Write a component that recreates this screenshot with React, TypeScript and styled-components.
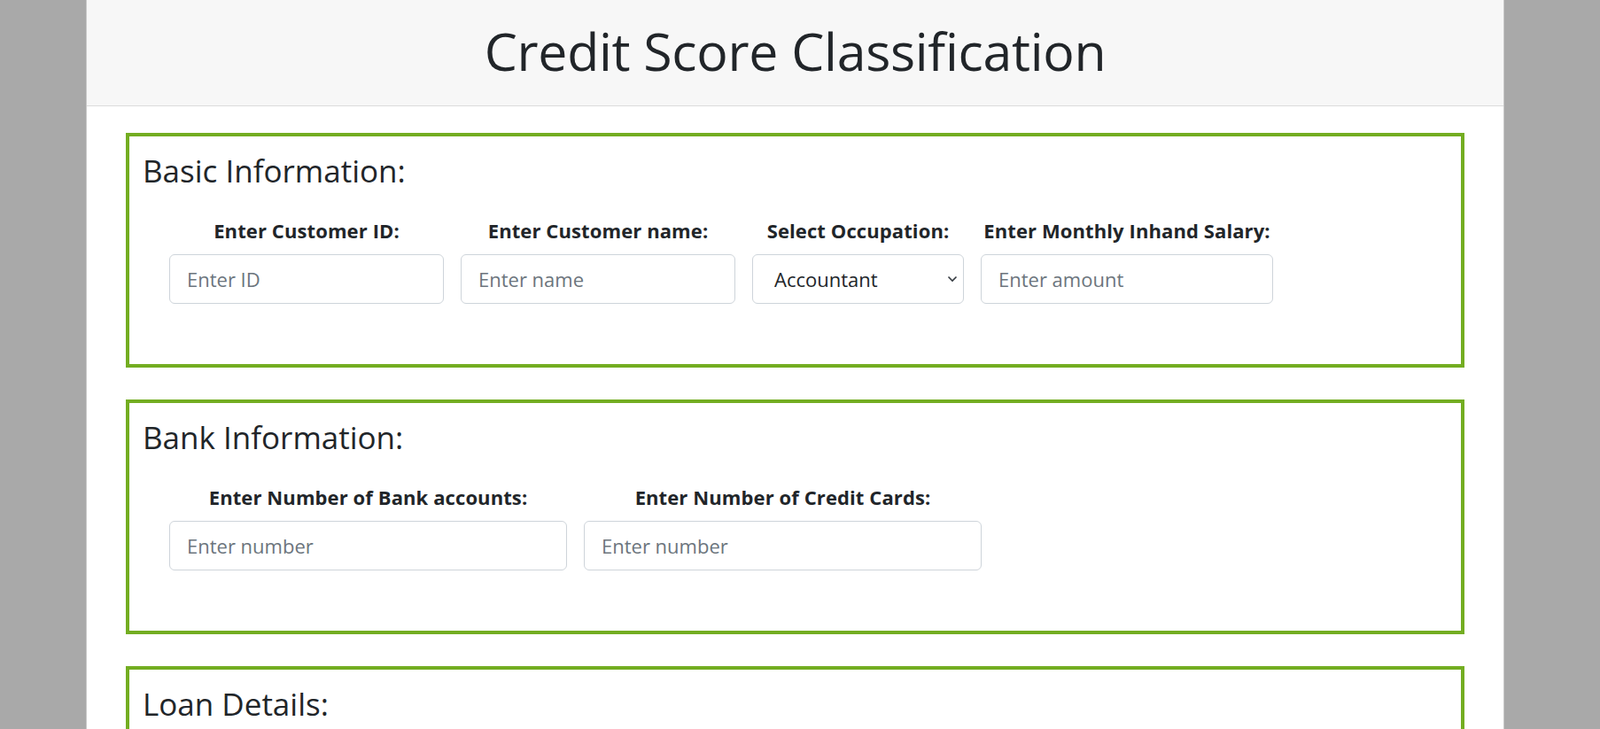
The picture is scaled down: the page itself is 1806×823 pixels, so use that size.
import React from "react";
import styled, { createGlobalStyle } from "styled-components";

const occupations = [
    "Accountant",
    "Architect",
    "Developer",
    "Doctor",
    "Engineer",
    "Entrepreneur",
    "Journalist",
    "Lawyer",
    "Manager",
    "Mechanic",
    "Media_Manager",
    "Musician",
    "Scientist",
    "Teacher",
    "Writer",
];

export default function App() {
    return (
        <>
            <GlobalStyle />
            <Page>
                <Card>
                    <Header>
                        <Title>Credit Score Classification</Title>
                    </Header>

                    <CardBody>
                        <Section>
                            <SectionTitle>Basic Information:</SectionTitle>
                            <FieldRow>
                                <Field width={310}>
                                    <Label>Enter Customer ID:</Label>
                                    <Input type="text" placeholder="Enter ID" />
                                </Field>
                                <Field width={310}>
                                    <Label>Enter Customer name:</Label>
                                    <Input type="text" placeholder="Enter name" />
                                </Field>
                                <Field width={239}>
                                    <Label>Select Occupation:</Label>
                                    <SelectWrap>
                                        <Select defaultValue="Accountant">
                                            {occupations.map((o) => (
                                                <option key={o} value={o}>
                                                    {o}
                                                </option>
                                            ))}
                                        </Select>
                                        <Chevron width="12" height="8" viewBox="0 0 12 8">
                                            <path d="M1.5 1.5 6 6l4.5-4.5" />
                                        </Chevron>
                                    </SelectWrap>
                                </Field>
                                <Field width={330}>
                                    <Label>Enter Monthly Inhand Salary:</Label>
                                    <Input type="number" placeholder="Enter amount" />
                                </Field>
                            </FieldRow>
                        </Section>

                        <Section>
                            <SectionTitle>Bank Information:</SectionTitle>
                            <FieldRow>
                                <Field width={449}>
                                    <Label>Enter Number of Bank accounts:</Label>
                                    <Input type="number" placeholder="Enter number" />
                                </Field>
                                <Field width={449}>
                                    <Label>Enter Number of Credit Cards:</Label>
                                    <Input type="number" placeholder="Enter number" />
                                </Field>
                            </FieldRow>
                        </Section>

                        <Section>
                            <SectionTitle>Loan Details:</SectionTitle>
                            <FieldRow>
                                <Field width={310}>
                                    <Label>Enter Interest Rate:</Label>
                                    <Input type="number" placeholder="Enter rate" />
                                </Field>
                                <Field width={310}>
                                    <Label>Enter Number of Loans:</Label>
                                    <Input type="number" placeholder="Enter number" />
                                </Field>
                            </FieldRow>
                        </Section>
                    </CardBody>
                </Card>
            </Page>
        </>
    );
}

const GlobalStyle = createGlobalStyle`
    html, body {
        margin: 0;
        padding: 0;
    }
    body {
        background: #a9a9a9;
        color: #212529;
        font-family: "Segoe UI", "Open Sans", "Liberation Sans", sans-serif;
    }
    * {
        box-sizing: border-box;
    }
`;

const Page = styled.div`
    padding-left: 97px;
`;

const Card = styled.div`
    width: 1601px;
    background: #fff;
    border: 1px solid #c9c9c9;
    border-top: none;
    border-radius: 0 0 6px 6px;
`;

const Header = styled.div`
    height: 120px;
    background: #f7f7f7;
    border-bottom: 1px solid #dcdcdc;
    display: flex;
    align-items: center;
    justify-content: center;
`;

const Title = styled.h1`
    margin: 0 0 4px;
    font-size: 59px;
    font-weight: 500;
    line-height: 1.2;
    letter-spacing: -0.3px;
`;

const CardBody = styled.div`
    padding: 30px 44px;
`;

const Section = styled.div`
    border: 4px solid #73ad21;
    padding: 18px 15px 68px;
    margin-bottom: 36px;
`;

const SectionTitle = styled.h3`
    margin: 0 0 30px;
    font-size: 35px;
    font-weight: 400;
    line-height: 1.2;
`;

const FieldRow = styled.div`
    display: flex;
    gap: 19px;
    padding-left: 30px;
`;

const Field = styled.div<{ width: number }>`
    width: ${(p) => p.width}px;
    display: flex;
    flex-direction: column;
    align-items: center;
`;

const Label = styled.label`
    font-size: 22px;
    font-weight: 700;
    line-height: 1.5;
    margin-bottom: 10px;
    white-space: nowrap;
    letter-spacing: 0.1px;
`;

const controlStyles = `
    width: 100%;
    height: 56px;
    padding: 0 19px;
    font-family: inherit;
    font-size: 22px;
    color: #212529;
    background: #fff;
    border: 1px solid #ced4da;
    border-radius: 6px;
    outline: none;
`;

const Input = styled.input`
    ${controlStyles}
    -moz-appearance: textfield;
    &::placeholder {
        color: #6c757d;
    }
    &::-webkit-outer-spin-button,
    &::-webkit-inner-spin-button {
        -webkit-appearance: none;
        margin: 0;
    }
`;

const SelectWrap = styled.div`
    position: relative;
    width: 100%;
`;

const Select = styled.select`
    ${controlStyles}
    padding-left: 24px;
    appearance: none;
    -webkit-appearance: none;
`;

const Chevron = styled.svg`
    position: absolute;
    right: 7px;
    top: 24px;
    fill: none;
    stroke: #343a40;
    stroke-width: 1.6;
    pointer-events: none;
`;
